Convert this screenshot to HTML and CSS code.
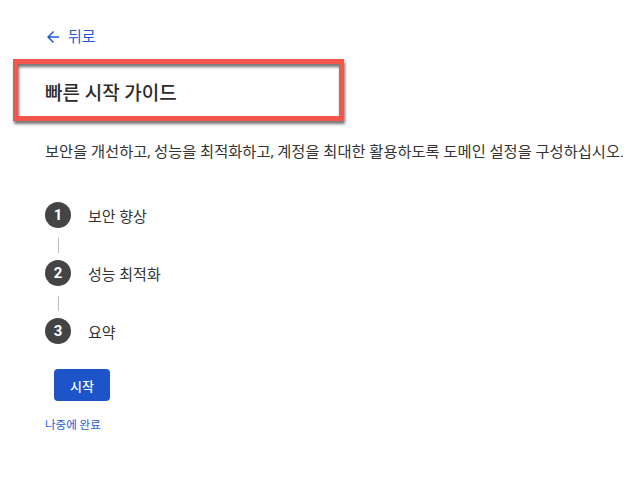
FILE: index.html
```html
<!DOCTYPE html>
<html lang="ko">
<head>
<meta charset="utf-8">
<title>빠른 시작 가이드</title>
<link rel="stylesheet" href="styles.css">
</head>
<body>
<div class="page">
  <a class="back" href="#"><svg class="arrow" viewBox="4 4 16 16" width="12" height="12" aria-hidden="true"><path d="M20 11H7.83l5.59-5.59L12 4l-8 8 8 8 1.41-1.41L7.83 13H20v-2z" fill="currentColor"/></svg><span>뒤로</span></a>
  <div class="title-block">
    <h1 class="title">빠른 시작 가이드</h1>
  </div>
  <p class="desc">보안을 개선하고, 성능을 최적화하고, 계정을 최대한 활용하도록 도메인 설정을 구성하십시오.</p>
  <ol class="steps">
    <li class="step"><span class="num">1</span><span class="label">보안 향상</span></li>
    <li class="connector"></li>
    <li class="step"><span class="num">2</span><span class="label">성능 최적화</span></li>
    <li class="connector"></li>
    <li class="step"><span class="num">3</span><span class="label">요약</span></li>
  </ol>
  <button class="start">시작</button>
  <a class="later" href="#">나중에 완료</a>
</div>
</body>
</html>
```

FILE: styles.css
```css
html, body {
  margin: 0;
  padding: 0;
  background: #ffffff;
}
body {
  font-family: Roboto, "Noto Sans CJK KR", sans-serif;
  color: #333333;
}
.page {
  display: flex;
  flex-direction: column;
  align-items: flex-start;
  padding: 27px 0 0 45px;
}
.back {
  display: flex;
  align-items: center;
  gap: 9px;
  height: 20px;
  margin-left: 2px;
  color: #1e5bd2;
  text-decoration: none;
  font-size: 15px;
  line-height: 20px;
}
.back .arrow {
  display: block;
  flex: none;
  margin-top: -1px;
}
.title-block {
  position: relative;
  margin: 17px 0 0 -27px;
  width: 321px;
  height: 52px;
  padding: 7px 0 0 27px;
  box-sizing: border-box;
  display: flex;
  align-items: center;
}
.title-block::after {
  content: "";
  position: absolute;
  inset: -5px;
  border: 5px solid #f5564b;
  filter: drop-shadow(1px 3px 1.5px rgba(0, 0, 0, 0.55));
  pointer-events: none;
}
.title {
  margin: 0;
  font-size: 19px;
  font-weight: 500;
  color: #2b2b2b;
  line-height: 24px;
}
.desc {
  margin: 26px 0 0;
  font-size: 15.3px;
  line-height: 20px;
  color: #333333;
}
.steps {
  list-style: none;
  margin: 40px 0 0;
  padding: 0;
  display: flex;
  flex-direction: column;
}
.step {
  display: flex;
  align-items: center;
  gap: 17px;
  height: 26px;
}
.num {
  width: 26px;
  height: 26px;
  border-radius: 50%;
  background: #444444;
  color: #ffffff;
  font-weight: 700;
  font-size: 15px;
  display: flex;
  align-items: center;
  justify-content: center;
}
.label {
  font-size: 15px;
  color: #333333;
}
.connector {
  width: 1px;
  height: 15px;
  margin: 10px 0 7px 13px;
  background: #bdbdbd;
}
.start {
  margin: 25px 0 0 9px;
  width: 56px;
  height: 32px;
  border: none;
  border-radius: 4px;
  background: #1d55c8;
  color: #ffffff;
  font-family: Roboto, "Noto Sans CJK KR", sans-serif;
  font-size: 13px;
  font-weight: 500;
  padding: 0;
}
.later {
  margin-top: 16px;
  font-size: 11.5px;
  line-height: 16px;
  color: #1e5bd2;
  text-decoration: none;
}
```
